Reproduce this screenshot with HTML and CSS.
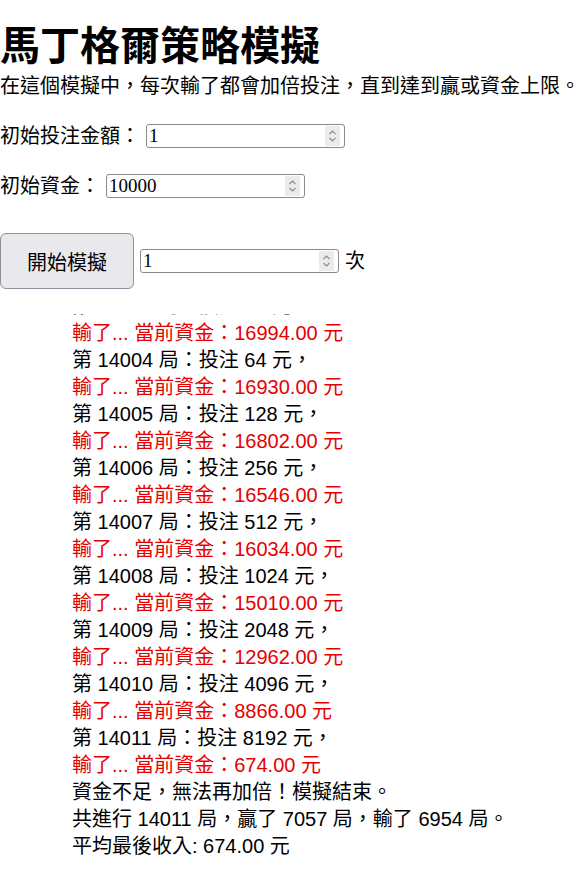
FILE: index.html
```html
<!DOCTYPE html>
<html lang="zh-Hant">
<head>
<meta charset="utf-8">
<title>馬丁格爾策略模擬</title>
<link rel="stylesheet" href="styles.css">
</head>
<body>
<h1 class="title">馬丁格爾策略模擬</h1>
<p class="intro">在這個模擬中，每次輸了都會加倍投注，直到達到贏或資金上限。</p>

<div class="field">
  <label class="label" for="bet">初始投注金額：</label>
  <span class="num">
    <input class="num-input" id="bet" type="text" value="1">
    <span class="spin"><svg width="15" height="20" viewBox="0 0 15 20"><path d="M4.5 8 L7.5 5 L10.5 8 M4.5 12 L7.5 15 L10.5 12" fill="none" stroke="#8a8a8a" stroke-width="1.1"/></svg></span>
  </span>
</div>

<div class="field field-2">
  <label class="label" for="cap">初始資金：</label>
  <span class="num">
    <input class="num-input" id="cap" type="text" value="10000">
    <span class="spin"><svg width="15" height="20" viewBox="0 0 15 20"><path d="M4.5 8 L7.5 5 L10.5 8 M4.5 12 L7.5 15 L10.5 12" fill="none" stroke="#8a8a8a" stroke-width="1.1"/></svg></span>
  </span>
</div>

<div class="actions">
  <button class="start" type="button">開始模擬</button>
  <span class="num">
    <input class="num-input" id="times" type="text" value="1">
    <span class="spin"><svg width="15" height="20" viewBox="0 0 15 20"><path d="M4.5 8 L7.5 5 L10.5 8 M4.5 12 L7.5 15 L10.5 12" fill="none" stroke="#8a8a8a" stroke-width="1.1"/></svg></span>
  </span>
  <span class="unit">次</span>
</div>

<div class="log">
  <div class="line">第 14001 局：投注 8 元，</div>
  <div class="line lose">輸了... 當前資金：17042.00 元</div>
  <div class="line">第 14002 局：投注 16 元，</div>
  <div class="line lose">輸了... 當前資金：17026.00 元</div>
  <div class="line">第 14003 局：投注 32 元，</div>
  <div class="line lose">輸了... 當前資金：16994.00 元</div>
  <div class="line">第 14004 局：投注 64 元，</div>
  <div class="line lose">輸了... 當前資金：16930.00 元</div>
  <div class="line">第 14005 局：投注 128 元，</div>
  <div class="line lose">輸了... 當前資金：16802.00 元</div>
  <div class="line">第 14006 局：投注 256 元，</div>
  <div class="line lose">輸了... 當前資金：16546.00 元</div>
  <div class="line">第 14007 局：投注 512 元，</div>
  <div class="line lose">輸了... 當前資金：16034.00 元</div>
  <div class="line">第 14008 局：投注 1024 元，</div>
  <div class="line lose">輸了... 當前資金：15010.00 元</div>
  <div class="line">第 14009 局：投注 2048 元，</div>
  <div class="line lose">輸了... 當前資金：12962.00 元</div>
  <div class="line">第 14010 局：投注 4096 元，</div>
  <div class="line lose">輸了... 當前資金：8866.00 元</div>
  <div class="line">第 14011 局：投注 8192 元，</div>
  <div class="line lose">輸了... 當前資金：674.00 元</div>
  <div class="line">資金不足，無法再加倍！模擬結束。</div>
  <div class="line">共進行 14011 局，贏了 7057 局，輸了 6954 局。</div>
  <div class="line">平均最後收入: 674.00 元</div>
</div>
</body>
</html>
```

FILE: styles.css
```css
html, body {
  margin: 0;
  padding: 0;
  background: #fff;
}

body {
  font-family: "Liberation Sans", "Noto Sans CJK TC", sans-serif;
  font-size: 20px;
  color: #000;
}

.title {
  margin: 22px 0 0;
  font-size: 40px;
  line-height: 48px;
  font-weight: bold;
}

.intro {
  margin: 3px 0 0;
  line-height: 27px;
  white-space: nowrap;
}

.field {
  display: flex;
  align-items: center;
  margin-top: 24px;
  height: 24px;
}

.field-2 {
  margin-top: 26px;
}

.label {
  line-height: 24px;
  margin-right: 6px;
}

.num {
  display: inline-flex;
  align-items: center;
  box-sizing: border-box;
  width: 199px;
  height: 24px;
  border: 1px solid #8a8a8a;
  border-radius: 3px;
  background: #fff;
}

.num-input {
  flex: 1;
  min-width: 0;
  border: 0;
  outline: none;
  padding: 0 0 0 2px;
  margin: 0;
  height: 22px;
  font-family: "Liberation Serif", serif;
  font-size: 19px;
  color: #000;
  background: transparent;
}

.spin {
  display: block;
  width: 15px;
  height: 20px;
  margin-right: 4px;
  background: #ebebeb;
}

.spin svg {
  display: block;
}

.actions {
  display: flex;
  align-items: center;
  margin-top: 35px;
  height: 56px;
}

.start {
  box-sizing: border-box;
  width: 134px;
  height: 56px;
  margin: 0 6px 0 0;
  padding: 0;
  border: 1px solid #8f8f9d;
  border-radius: 6px;
  background: #e9e9ed;
  font-family: "Liberation Sans", "Noto Sans CJK TC", sans-serif;
  font-size: 20px;
  color: #000;
}

.unit {
  margin-left: 6px;
  line-height: 24px;
}

.log {
  display: flex;
  flex-direction: column;
  justify-content: flex-end;
  margin-top: 25px;
  height: 546px;
  overflow: hidden;
  padding-left: 72px;
}

.line {
  flex: none;
  line-height: 27px;
  white-space: nowrap;
}

.lose {
  color: #e60000;
}
```
